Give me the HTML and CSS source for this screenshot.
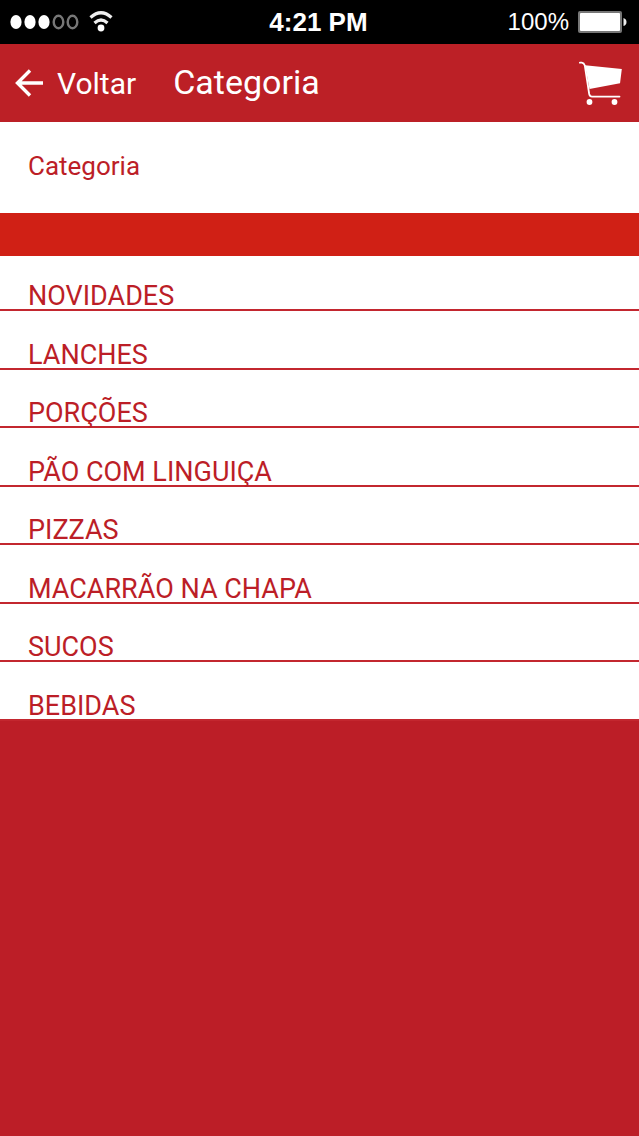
FILE: index.html
```html
<!DOCTYPE html>
<html lang="pt-BR">
<head>
<meta charset="utf-8">
<meta name="viewport" content="width=device-width, initial-scale=1">
<title>Categoria</title>
<link rel="stylesheet" href="styles.css">
</head>
<body>
<div class="status-bar">
  <div class="status-left">
    <svg class="signal" viewBox="0 0 70 16" aria-hidden="true">
      <g fill="#fff"><ellipse cx="6" cy="8" rx="5.600" ry="7"/><ellipse cx="20" cy="8" rx="5.600" ry="7"/><ellipse cx="34" cy="8" rx="5.600" ry="7"/></g>
      <g fill="none" stroke="#777" stroke-width="2.400"><ellipse cx="48.500" cy="8" rx="4.800" ry="6.200"/><ellipse cx="62.500" cy="8" rx="4.800" ry="6.200"/></g>
    </svg>
    <svg class="wifi" viewBox="0 0 24 22" aria-hidden="true">
      <path d="M1.500 6.500Q12-3 22.500 6.500M5.500 12Q12 6 18.500 12" fill="none" stroke="#eee" stroke-width="3.200"/>
      <circle cx="12" cy="17" r="3.400" fill="#fff"/>
    </svg>
  </div>
  <span class="status-time">4:21 PM</span>
  <div class="status-right">
    <span class="status-percent">100%</span>
    <svg class="battery" viewBox="0 0 50 24" aria-hidden="true">
      <rect x="1" y="1" width="44" height="22" rx="2" fill="#777"/>
      <rect x="3" y="3" width="40" height="18" rx="1" fill="#fff"/>
      <path d="M46.500 8q3 1 3 4t-3 4z" fill="#eee"/>
    </svg>
  </div>
</div>
<header class="app-bar">
  <button class="back" type="button">
    <svg class="back-icon" viewBox="0 0 30 28" aria-hidden="true"><path d="M16 1.500 3.500 14 16 26.500M3.500 14H29" fill="none" stroke="#fff" stroke-width="3.400"/></svg>
    <span>Voltar</span>
  </button>
  <h1 class="title">Categoria</h1>
  <button class="cart" type="button" aria-label="Carrinho">
    <svg class="cart-icon" viewBox="0 0 44 44" aria-hidden="true">
      <path d="M0.800 1.700h2Q5 2 5.800 4.500l4.400 28.500Q10.800 35.600 13 35.600H40.500" fill="none" stroke="#fff" stroke-width="1.800" stroke-linecap="round"/>
      <path d="M6 4.300 42.800 8 41 22.300 10.500 28z" fill="#fff"/>
      <circle cx="10.500" cy="41" r="2.900" fill="#fff"/><circle cx="35.500" cy="41" r="2.900" fill="#fff"/>
    </svg>
  </button>
</header>
<main>
  <h2 class="section-title">Categoria</h2>
  <div class="band"></div>
  <ul class="categories">
    <li><a href="#novidades">NOVIDADES</a></li>
    <li><a href="#lanches">LANCHES</a></li>
    <li><a href="#porcoes">PORÇÕES</a></li>
    <li><a href="#pao">PÃO COM LINGUIÇA</a></li>
    <li><a href="#pizzas">PIZZAS</a></li>
    <li><a href="#macarrao">MACARRÃO NA CHAPA</a></li>
    <li><a href="#sucos">SUCOS</a></li>
    <li><a href="#bebidas">BEBIDAS</a></li>
  </ul>
</main>
</body>
</html>
```
FILE: styles.css
```css
* {
  box-sizing: border-box;
}

body {
  margin: 0;
  min-height: 100vh;
  background: #bc1e27;
  color: #bc1e27;
  font-family: Roboto, "Noto Sans", sans-serif;
  font-size: 27px;
}

button {
  padding: 0;
  border: 0;
  background: none;
  color: inherit;
  font: inherit;
}

svg {
  display: block;
  flex: none;
}

.status-bar {
  display: grid;
  grid-template-columns: 1fr auto 1fr;
  align-items: center;
  height: 44px;
  padding: 0 12px 0 10px;
  background: #000;
  color: #fff;
  font-family: "Liberation Sans", Arial, sans-serif;
}

.status-left,
.status-right {
  display: flex;
  align-items: center;
}

.status-left {
  gap: 9px;
}

.status-right {
  justify-content: flex-end;
  gap: 8px;
}

.signal {
  width: 70px;
  height: 16px;
}

.wifi {
  width: 24px;
  height: 22px;
}

.battery {
  width: 50px;
  height: 24px;
}

.status-time {
  font-size: 26px;
  font-weight: 700;
}

.status-percent {
  font-size: 24px;
}

.app-bar {
  display: flex;
  align-items: center;
  height: 78px;
  padding: 0 16px 0 14px;
  background: #bc2026;
  color: #fff;
}

.back {
  display: flex;
  align-items: center;
  gap: 13px;
  font-size: 30px;
}

.back-icon {
  width: 30px;
  height: 28px;
}

.title {
  flex: 1;
  margin: 0 0 0 37px;
  padding-bottom: 2px;
  font-size: 34px;
  font-weight: 400;
}

.cart-icon {
  width: 44px;
  height: 44px;
}

.section-title {
  display: flex;
  align-items: center;
  height: 91px;
  margin: 0;
  padding: 0 28px 4px;
  background: #fff;
  font-size: 26px;
  font-weight: 400;
}

.band {
  height: 43px;
  background: #d02015;
}

.categories {
  margin: 0;
  padding: 0;
  background: #fff;
  list-style: none;
}

.categories li {
  display: flex;
  align-items: flex-end;
  height: 58px;
  border-bottom: 2px solid #c3272f;
}

.categories li:nth-child(even) {
  height: 59px;
}

.categories li:first-child {
  height: 55px;
}

.categories a {
  flex: 1;
  padding: 0 28px;
  color: inherit;
  line-height: 26px;
  text-decoration: none;
}
```
